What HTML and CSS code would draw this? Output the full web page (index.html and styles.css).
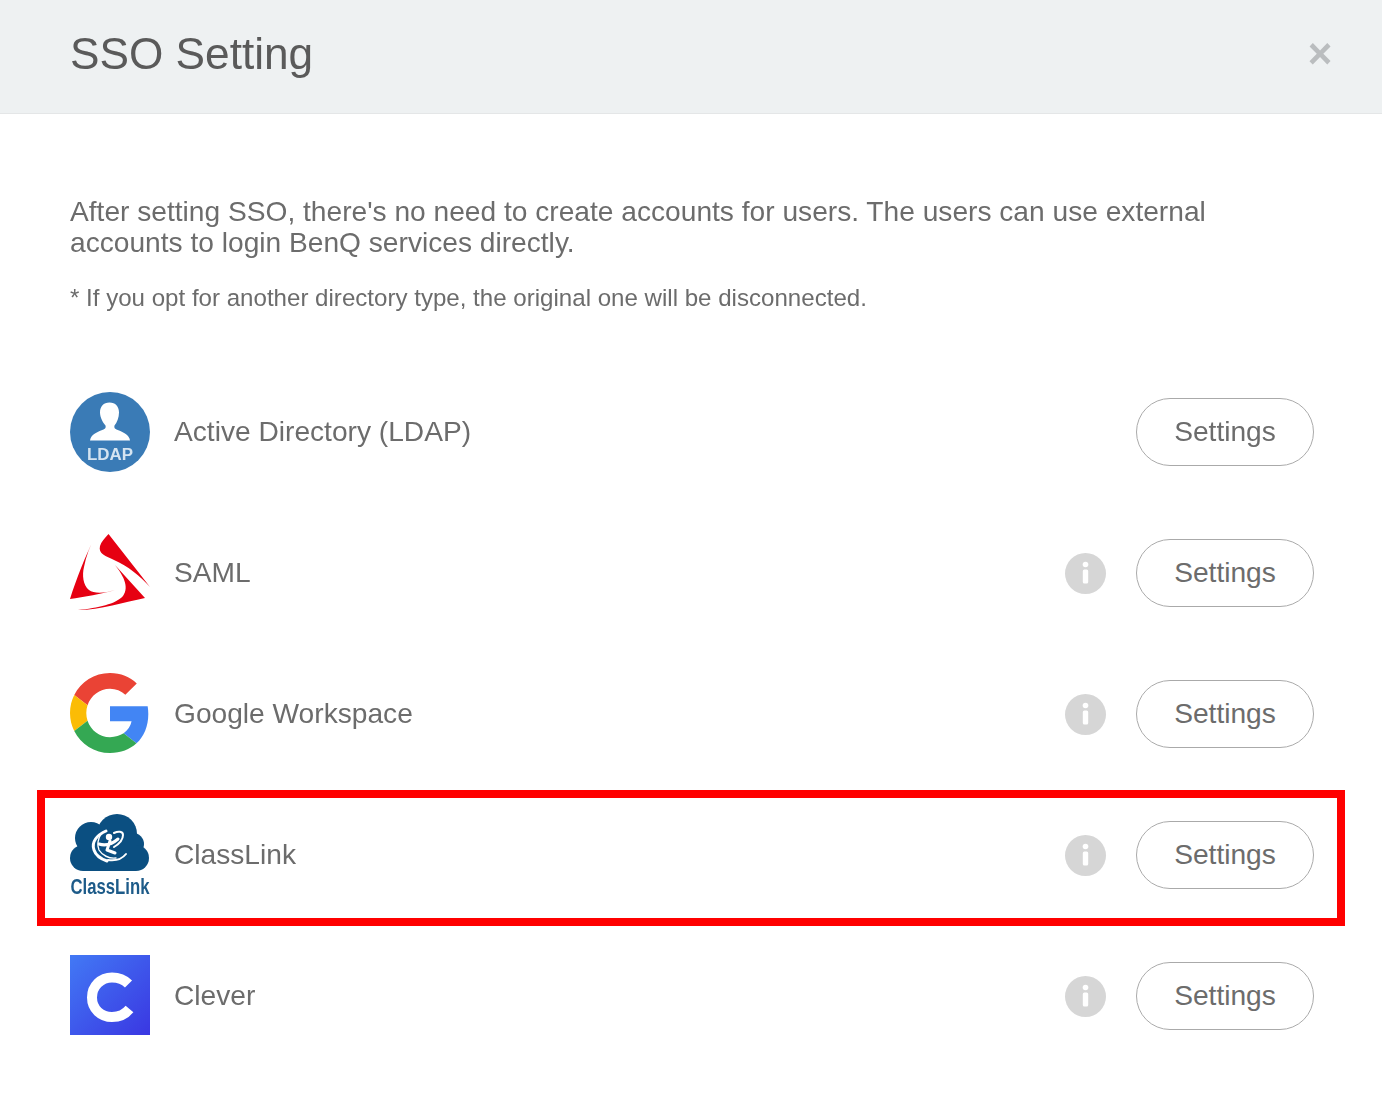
FILE: index.html
```html
<!DOCTYPE html>
<html lang="en">
<head>
<meta charset="utf-8">
<title>SSO Setting</title>
<link rel="stylesheet" href="styles.css">
</head>
<body>
<svg class="sprites" width="0" height="0">
  <symbol id="info-glyph" viewBox="0 0 41 41">
    <circle cx="20.500" cy="11.500" r="2.800" fill="#fff"/>
    <rect x="17.800" y="16.500" width="5.400" height="14" rx="1.500" fill="#fff"/>
  </symbol>
</svg>
<div class="modal">
  <header class="modal-header">
    <h1 class="modal-title">SSO Setting</h1>
    <button class="close" type="button">×</button>
  </header>
  <main class="modal-body">
    <p class="intro">After setting SSO, there's no need to create accounts for users. The users can use external accounts to login BenQ services directly.</p>
    <p class="note">* If you opt for another directory type, the original one will be disconnected.</p>
    <ul class="sso-list">
      <li class="sso-row">
        <svg class="logo" viewBox="0 0 80 80">
          <circle cx="40" cy="41" r="40" fill="#3a7bb6"/>
          <path fill="#fff" d="M39.500 11.500c6 0 9.500 4 9.500 10 0 5-2 10-4.500 13-.5 2 0 3 2 4 5 2 11 4 13 9l.5 2H20l.5-2c2-5 8-7 13-9 2-1 2.500-2 2-4-2.500-3-5.500-8-5.500-13 0-6 3.500-10 9.500-10z"/>
          <text class="ldap-text" x="40" y="69" text-anchor="middle" textLength="46" lengthAdjust="spacingAndGlyphs">LDAP</text>
        </svg>
        <span class="sso-name">Active Directory (LDAP)</span>
        <button class="settings" type="button">Settings</button>
      </li>
      <li class="sso-row">
        <svg class="logo" viewBox="0 0 80 80">
          <path fill="#e60012" d="M38.500 2L80 55C70 44 58 34 44 28 36 24 28 22 30 14 31 10 35 6 38.500 2z"/>
          <path fill="#e60012" d="M25 5C16 22 6 48 0 67 14 65 32 62 45 58 36 61 24 62 19 58 13 53 12 43 14 35 16 24 20 14 25 5z"/>
          <path fill="#e60012" d="M45 33L75 66C55 70 30 78 8 78 28 76 46 72 53 64 60 54 52 42 45 33z"/>
        </svg>
        <span class="sso-name">SAML</span>
        <span class="info"><svg class="info-icon"><use href="#info-glyph"/></svg></span>
        <button class="settings" type="button">Settings</button>
      </li>
      <li class="sso-row">
        <svg class="logo" viewBox="0 0 48 48">
          <path fill="#ea4335" d="M24 9.500c3.540 0 6.710 1.220 9.210 3.600l6.850-6.850C35.900 2.380 30.470 0 24 0 14.620 0 6.510 5.380 2.560 13.220l7.980 6.190C12.430 13.720 17.740 9.500 24 9.500z"/>
          <path fill="#4285f4" d="M46.980 24.550c0-1.570-.15-3.090-.38-4.550H24v9.020h12.940c-.58 2.960-2.260 5.480-4.780 7.180l7.730 6c4.510-4.180 7.090-10.360 7.090-17.650z"/>
          <path fill="#fbbc05" d="M10.530 28.590c-.48-1.450-.76-2.990-.76-4.590s.27-3.140.76-4.590l-7.980-6.190C.92 16.460 0 20.120 0 24c0 3.880.92 7.540 2.560 10.780l7.970-6.190z"/>
          <path fill="#34a853" d="M24 48c6.480 0 11.930-2.130 15.890-5.810l-7.730-6c-2.150 1.450-4.920 2.300-8.160 2.300-6.260 0-11.570-4.220-13.470-9.910l-7.980 6.190C6.510 42.620 14.620 48 24 48z"/>
        </svg>
        <span class="sso-name">Google Workspace</span>
        <span class="info"><svg class="info-icon"><use href="#info-glyph"/></svg></span>
        <button class="settings" type="button">Settings</button>
      </li>
      <li class="sso-row">
        <svg class="logo" viewBox="0 0 80 80">
          <g fill="#0b4f81">
            <circle cx="13" cy="44" r="13"/>
            <circle cx="21" cy="24" r="16"/>
            <circle cx="47" cy="20" r="20"/>
            <circle cx="63" cy="30" r="11"/>
            <circle cx="66" cy="44" r="13"/>
            <rect x="13" y="28" width="53" height="29"/>
          </g>
          <g fill="none" stroke="#fff" stroke-linecap="round">
            <path stroke-width="3" d="M36 17C27 21 21 28 24 36c2 6 7 9 13 11"/>
            <path stroke-width="1.400" d="M31 20c-3 5-4 11-2 16 3 5 10 9 17 8"/>
            <path stroke-width="3" d="M29 30c6 2 12 1 19-5M40 27l-3 9M37 36l8 3"/>
            <path stroke-width="2" d="M44 19c4-2 9-2 9 2 0 5-4 9-9 12M38 46c7 1 14-1 18-6"/>
          </g>
          <circle cx="39" cy="23" r="3.200" fill="#fff"/>
          <text class="cl-text" x="40" y="80" text-anchor="middle" textLength="79" lengthAdjust="spacingAndGlyphs">ClassLink</text>
        </svg>
        <span class="sso-name">ClassLink</span>
        <span class="info"><svg class="info-icon"><use href="#info-glyph"/></svg></span>
        <button class="settings" type="button">Settings</button>
        <div class="highlight"></div>
      </li>
      <li class="sso-row">
        <svg class="logo" viewBox="0 0 80 80">
          <defs>
            <linearGradient id="cleverBg" x1="0" y1="0" x2="1" y2="1">
              <stop offset="0" stop-color="#4279f5"/>
              <stop offset="1" stop-color="#3a37e2"/>
            </linearGradient>
          </defs>
          <rect width="80" height="80" fill="url(#cleverBg)"/>
          <path fill="none" stroke="#fff" stroke-width="10" d="M58.500 29C54 24.500 49 22.500 42 22.500 31 22.500 22 31 22 42.500S31 62 42 62C49 62 55 59.500 59.500 54"/>
        </svg>
        <span class="sso-name">Clever</span>
        <span class="info"><svg class="info-icon"><use href="#info-glyph"/></svg></span>
        <button class="settings" type="button">Settings</button>
      </li>
    </ul>
  </main>
</div>
</body>
</html>
```
FILE: styles.css
```css
* { box-sizing: border-box; }
html, body { margin: 0; padding: 0; background: #fff; }
body { font-family: "Liberation Sans", Arial, sans-serif; color: #666; }
.sprites { position: absolute; }
.modal { width: 1382px; height: 1100px; overflow: hidden; filter: blur(.6px); }
.modal-header {
  height: 114px;
  background: #eef1f2;
  border-bottom: 1px solid #e4e6e7;
  display: flex;
  align-items: center;
  justify-content: space-between;
  padding: 0 50px 6px 70px;
}
.modal-title { margin: 0; font-size: 44.200px; font-weight: 400; line-height: 60px; color: #5a5a5a; }
.close {
  border: 0; background: none; padding: 0; margin: 0;
  font: 700 42px/1 "Liberation Sans", Arial, sans-serif;
  color: #babdbf; width: 24px;
  display: flex; justify-content: center;
}
.modal-body { padding: 82px 68px 0 70px; }
.intro { margin: 0; font-size: 28.150px; line-height: 31px; color: #6c6c6c; }
.note { margin: 24px 0 0; font-size: 24.100px; line-height: 31px; color: #6c6c6c; }
.sso-list { list-style: none; margin: 48px 0 0; padding: 0; }
.sso-row { position: relative; height: 141px; display: flex; align-items: center; }
.logo { width: 80px; height: 80px; flex: none; display: block; overflow: visible; margin-bottom: 2px; }
.sso-name { font-size: 28.150px; margin-left: 24px; flex: 1; color: #6c6c6c; }
.info {
  width: 41px; height: 41px; border-radius: 50%;
  background: #d6d6d6;
  margin: 2px 30px 0 0; flex: none;
}
.info-icon { display: block; width: 41px; height: 41px; }
.settings {
  width: 178px; height: 68px; flex: none;
  border: 1.500px solid #aaa; border-radius: 34px; background: #fff;
  font: 400 28.150px "Liberation Sans", Arial, sans-serif; color: #6c6c6c; padding: 0;
}
.ldap-text { font: 700 16px "Liberation Sans", Arial, sans-serif; fill: #d5e4f1; }
.cl-text { font: 700 22px "Liberation Sans", Arial, sans-serif; fill: #1d5b89; }
.highlight {
  position: absolute; left: -33px; right: -31px; top: 6px; bottom: -1px;
  border: 8px solid #f00; pointer-events: none;
}
```
